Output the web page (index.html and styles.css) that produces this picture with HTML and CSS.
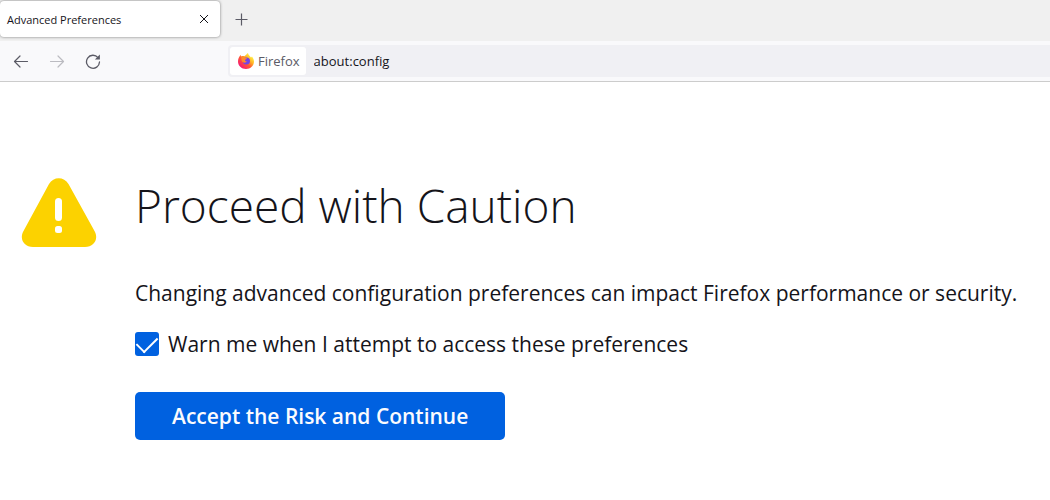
FILE: index.html
```html
<!DOCTYPE html>
<html lang="en">
<head>
    <meta charset="UTF-8">
    <meta name="viewport" content="width=device-width, initial-scale=1.0">
    <title>Advanced Preferences</title>
    <link rel="stylesheet" href="styles.css">
</head>
<body>
    <!-- Tab strip -->
    <div class="tab-bar">
        <div class="tab">
            <span class="tab-title">Advanced Preferences</span>
            <button class="icon-btn tab-close" type="button" aria-label="Close tab">
                <svg width="10" height="10" viewBox="0 0 10 10"><path d="M1 1l8 8M9 1l-8 8" fill="none" stroke="#15141a" stroke-width="1"/></svg>
            </button>
        </div>
        <button class="icon-btn" type="button" aria-label="New tab">
            <svg width="13" height="13" viewBox="0 0 13 13"><path d="M6.500 .5v12M.5 6.500h12" fill="none" stroke="#5b5b66" stroke-width="1.2"/></svg>
        </button>
    </div>

    <!-- Navigation toolbar -->
    <div class="toolbar">
        <div class="nav-buttons">
            <button class="icon-btn" type="button" aria-label="Back">
                <svg width="16" height="16" viewBox="0 0 16 16"><path d="M14.500 8.500H1.500M7 3L1.500 8.500L7 14" fill="none" stroke="#5b5b66" stroke-width="1.200" stroke-linecap="round" stroke-linejoin="round"/></svg>
            </button>
            <button class="icon-btn" type="button" aria-label="Forward" disabled>
                <svg width="16" height="16" viewBox="0 0 16 16"><path d="M1.500 8.500h13M9 3L14.500 8.500L9 14" fill="none" stroke="#bbbbc1" stroke-width="1.200" stroke-linecap="round" stroke-linejoin="round"/></svg>
            </button>
            <button class="icon-btn" type="button" aria-label="Reload">
                <svg width="16" height="16" viewBox="0 0 16 16">
                    <path d="M13 4.600A6.500 6.500 0 1 0 14.500 9" fill="none" stroke="#5b5b66" stroke-width="1.300" stroke-linecap="round"/>
                    <path d="M14.900 1.500v5H9.900z" fill="#5b5b66"/>
                </svg>
            </button>
        </div>
        <div class="url-bar">
            <button class="identity" type="button">
                <svg width="16" height="16" viewBox="0 0 16 16">
                    <defs>
                        <linearGradient id="fire" x1="0.900" y1="0.100" x2="0.150" y2="0.900">
                            <stop offset="0.100" stop-color="#fff044"/>
                            <stop offset="0.350" stop-color="#ffb326"/>
                            <stop offset="0.600" stop-color="#ff5634"/>
                            <stop offset="1" stop-color="#f5157a"/>
                        </linearGradient>
                    </defs>
                    <path d="M10 0C10 1.800 12 3 13 4.500L14 3.500C15.200 5 16 6.800 16 8.500C16 12.800 12.500 16 8 16S0 12.800 0 8.500C0 6 1 4.300 1.800 3L2.600 1.800L3 3.500C4.200 2.900 5.500 2.900 6.300 3.300C7.800 2.500 8.500 1 10 0z" fill="url(#fire)"/>
                    <circle cx="8.400" cy="8" r="3.600" fill="#7542e5"/>
                    <path d="M3.500 4C5 3.400 6.500 4 7 5L9 5.300C8.800 6.500 7.300 6.400 7 7C6.900 8 7.800 8.600 9 8.300C8.500 9.500 6.500 10.300 5 9.300C3.500 8.300 3 6.500 3.500 4z" fill="#ff8a2b"/>
                </svg>
                <span>Firefox</span>
            </button>
            <input class="url-input" type="text" value="about:config" aria-label="Address">
        </div>
    </div>

    <!-- Warning page -->
    <main class="warning">
        <svg class="warning-icon" width="76" height="70" viewBox="0 0 76 70" aria-hidden="true">
            <path d="M28 6C32.500 -1.800 43 -1.800 47.500 6L73.500 53C78 61 73 69 64 69H12C3 69 -2 61 2.500 53z" fill="#fcd200"/>
            <rect x="34" y="20" width="7" height="23" rx="3.500" fill="#fff"/>
            <rect x="34" y="48" width="7" height="7" rx="2.500" fill="#fff"/>
        </svg>
        <div class="warning-content">
            <h1>Proceed with Caution</h1>
            <p>Changing advanced configuration preferences can impact Firefox performance or security.</p>
            <div class="check-row">
                <input type="checkbox" id="show-warning" checked>
                <label for="show-warning">Warn me when I attempt to access these preferences</label>
            </div>
            <button class="accept-btn" type="button">Accept the Risk and Continue</button>
        </div>
    </main>
</body>
</html>
```
FILE: styles.css
```css
* {
    box-sizing: border-box;
}
body {
    margin: 0;
    background: #fff;
    color: #15141a;
    font-family: "Segoe UI", "Open Sans", sans-serif;
}
button, input {
    font-family: inherit;
    color: inherit;
}
svg {
    display: block;
    flex-shrink: 0;
}
.icon-btn {
    display: flex;
    align-items: center;
    justify-content: center;
    padding: 0;
    border: none;
    background: none;
}
.tab-bar {
    display: flex;
    align-items: center;
    gap: 15px;
    height: 41px;
    padding-bottom: 3px;
    background: #f0f0f0;
}
.tab {
    display: flex;
    align-items: center;
    justify-content: space-between;
    width: 220px;
    height: 36px;
    padding: 0 11px 0 7px;
    border-radius: 4px;
    background: #fff;
    box-shadow: 0 0 3px rgba(0, 0, 0, 0.5);
    font-size: 11px;
}
.toolbar {
    display: flex;
    align-items: center;
    height: 41px;
    border-bottom: 1px solid #ccc;
    background: #f9f9fb;
}
.nav-buttons {
    display: flex;
    gap: 20px;
    width: 228px;
    padding-left: 13px;
}
.url-bar {
    display: flex;
    flex: 1;
    align-items: center;
    gap: 8px;
    height: 32px;
    padding: 2px;
    border-radius: 4px 0 0 4px;
    background: #f0f0f4;
}
.identity {
    display: flex;
    align-items: center;
    gap: 4px;
    height: 28px;
    padding: 0 6px 0 8px;
    border: none;
    border-radius: 3px;
    background: #fff;
    color: #5b5b66;
    font-size: 13px;
}
.url-input {
    flex: 1;
    padding: 0;
    border: none;
    outline: none;
    background: none;
    font-size: 13px;
}
.warning {
    display: flex;
    align-items: flex-start;
    gap: 38px;
    padding: 88px 16px 40px 21px;
}
.warning-icon {
    margin-top: 8px;
}
h1 {
    margin: 0;
    font-size: 46px;
    font-weight: 300;
    line-height: 70px;
}
p {
    margin: 37px 0 19px;
    font-size: 21px;
    line-height: 32px;
}
.check-row {
    display: flex;
    align-items: center;
    gap: 9px;
    font-size: 21px;
    line-height: 32px;
}
.check-row input {
    appearance: none;
    width: 24px;
    height: 24px;
    margin: 0;
    border-radius: 3px;
    background: #0061e0;
}
.check-row input:checked::before {
    content: "";
    display: block;
    width: 10px;
    height: 18px;
    margin: 0 auto;
    border: solid #fff;
    border-width: 0 2px 2px 0;
    transform: rotate(45deg);
}
.accept-btn {
    height: 48px;
    margin-top: 32px;
    padding: 0 37px;
    border: none;
    border-radius: 5px;
    background: #0061e0;
    color: #fbfbfe;
    font-size: 21px;
    font-weight: 600;
}
```
